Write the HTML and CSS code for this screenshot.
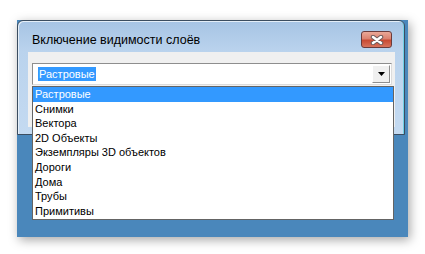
FILE: index.html
```html
<html lang="ru">
<head>
  <meta charset="UTF-8">
  <title>Включение видимости слоёв</title>
  <link rel="stylesheet" href="styles.css">
</head>
<body>
  <div class="shot">
    <div class="dialog">
      <div class="titlebar">
        <span class="title">Включение видимости слоёв</span>
        <button class="close">
          <svg width="14" height="10" viewBox="0 0 14 10">
            <path d="M3 2 L11 8 M11 2 L3 8" stroke="#6e5a5a" stroke-width="4.5" stroke-linecap="round"/>
            <path d="M3 2 L11 8 M11 2 L3 8" stroke="#ffffff" stroke-width="2.5" stroke-linecap="round"/>
          </svg>
        </button>
      </div>
      <div class="client">
        <div class="combo">
          <div class="value"><span class="sel">Растровые</span></div>
          <div class="arrow">
            <svg width="7" height="4" viewBox="0 0 7 4"><path d="M0 0 H7 L3.5 4 Z" fill="#000"/></svg>
          </div>
        </div>
      </div>
    </div>

    <ul class="dropdown">
      <li class="active">Растровые</li>
      <li>Снимки</li>
      <li>Вектора</li>
      <li>2D Объекты</li>
      <li>Экземпляры 3D объектов</li>
      <li>Дороги</li>
      <li>Дома</li>
      <li>Трубы</li>
      <li>Примитивы</li>
    </ul>
  </div>
</body>
</html>
```

FILE: styles.css
```css
body {
  margin: 0;
  padding: 20px 0 0 17px;
  background-color: #ffffff;
  font-family: "Liberation Sans", Arial, sans-serif;
}
.shot {
  position: relative;
  width: 391px;
  height: 217px;
  background-color: #4a87bb;
  box-shadow: 2px 3px 10px rgba(0, 0, 0, 0.35);
}
.dialog {
  width: 386px;
  height: 113px;
  border: 1px solid #3b4d60;
  border-radius: 6px 6px 0 0;
  background: linear-gradient(to bottom, #a6c4e4 0px, #bad3ed 30px, #c4daf1 100%);
  box-shadow: inset 1px 1px 0 #e4eef8, inset -1px 0 0 #6fd0e6;
}
.titlebar {
  display: flex;
  justify-content: space-between;
  align-items: flex-start;
  height: 31px;
  padding: 0 12px 0 14px;
  box-sizing: border-box;
}
.title {
  margin-top: 12px;
  font-size: 12.5px;
  line-height: 15px;
  color: #000;
}
.close {
  margin-top: 10px;
  width: 31px;
  height: 17px;
  padding: 0;
  border: 1px solid #6b3b3b;
  border-radius: 3px;
  background: linear-gradient(to bottom, #eaa898 0%, #dc826f 45%, #c84a33 55%, #d8735c 100%);
  display: flex;
  align-items: center;
  justify-content: center;
}
.client {
  margin: 0 9px 0 10px;
  height: 75px;
  background-color: #f0f0f0;
  padding-top: 11px;
  box-sizing: border-box;
}
.combo {
  display: flex;
  margin: 0 3px 0 4px;
  height: 22px;
  border: 1px solid #8e8e8e;
  border-right-color: #dcdcdc;
  border-bottom-color: #dcdcdc;
  background-color: #ffffff;
  box-sizing: border-box;
}
.value {
  flex: 1;
  padding: 3px 0 0 5px;
}
.sel {
  display: inline-block;
  height: 14px;
  line-height: 14px;
  font-size: 11px;
  padding: 0 1px;
  background-color: #3399ff;
  color: #ffffff;
}
.arrow {
  width: 16px;
  margin: 1px 1px 1px 0;
  background-color: #f0f0f0;
  border: 1px solid #ffffff;
  border-right-color: #8e8e8e;
  border-bottom-color: #8e8e8e;
  display: flex;
  align-items: center;
  justify-content: center;
}
.dropdown {
  position: absolute;
  left: 15px;
  top: 66px;
  width: 362px;
  height: 134px;
  margin: 0;
  padding: 0;
  list-style: none;
  border: 1px solid #646464;
  background-color: #ffffff;
  box-sizing: border-box;
}
.dropdown li {
  height: 14.6px;
  line-height: 14.6px;
  padding-left: 2px;
  font-size: 11px;
  color: #000;
}
.dropdown li.active {
  background-color: #3399ff;
  color: #ffffff;
}
```
